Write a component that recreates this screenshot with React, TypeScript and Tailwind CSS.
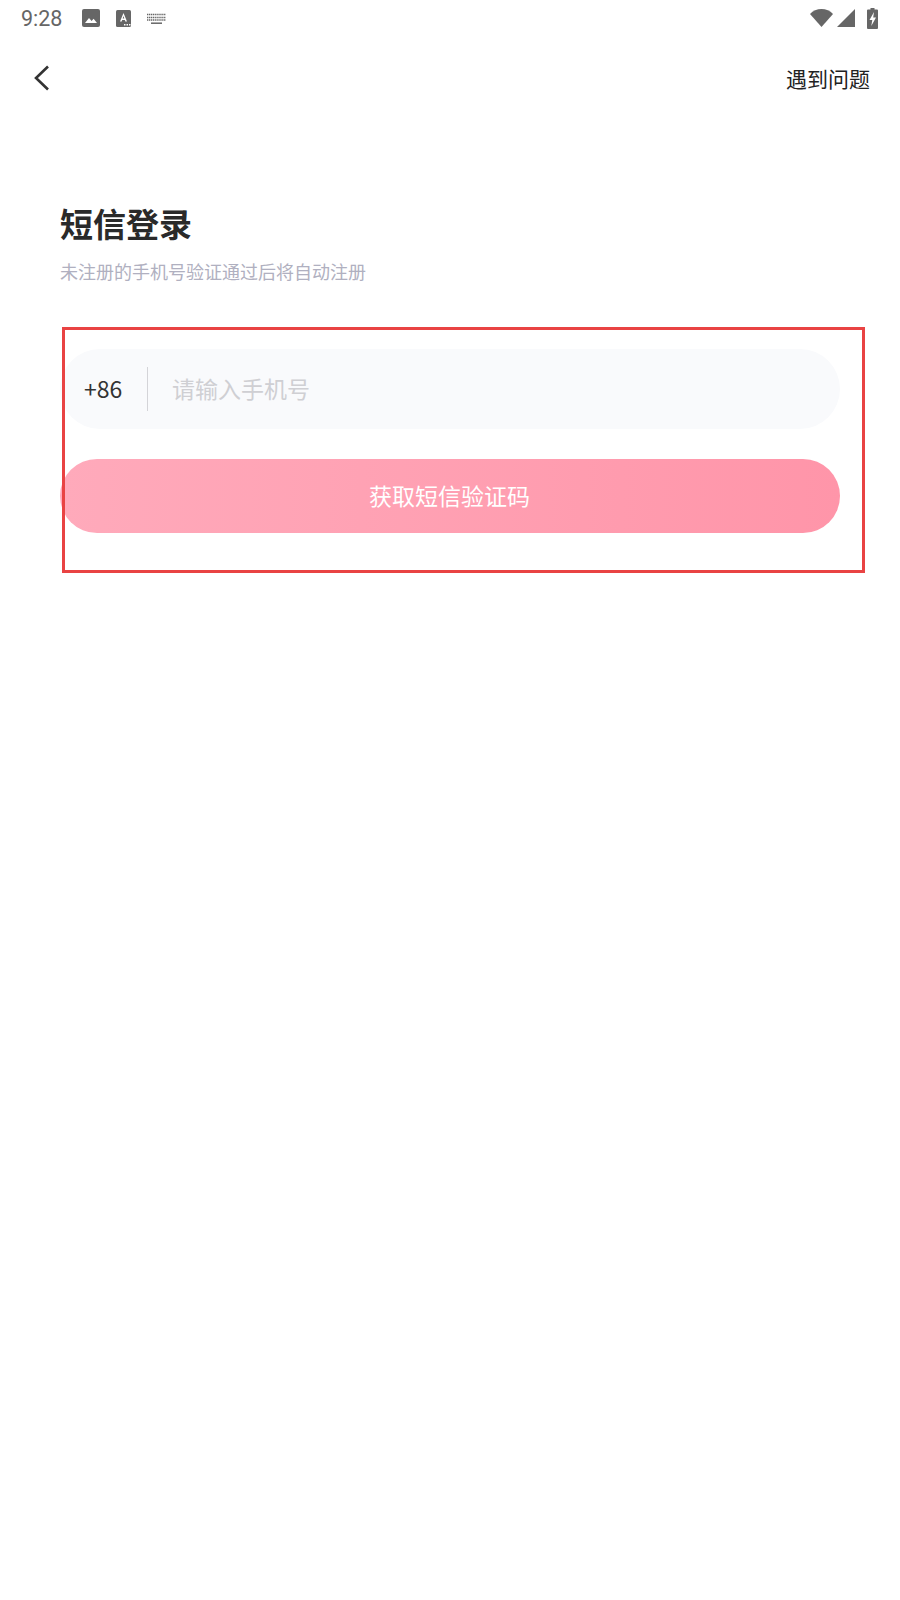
const cjk = "font-['Noto_Sans_CJK_SC','Noto_Sans',sans-serif]";

function StatusBar() {
  return (
    <div className="flex h-[36px] items-center justify-between pl-[21px] pr-[22px] text-[#666666]">
      <div className="flex items-center">
        <span className="mt-[1px] w-[42px] font-['Roboto',sans-serif] text-[21.5px] leading-none">9:28</span>
        <div className="ml-[19px] flex items-center">
          <svg width="18" height="18" viewBox="0 0 18 18" fill="#666666">
            <path d="M2 0h14a2 2 0 0 1 2 2v14a2 2 0 0 1-2 2H2a2 2 0 0 1-2-2V2a2 2 0 0 1 2-2z" />
            <path d="M3 14l4-5 2.600 3 2-2.300L15 14z" fill="#ffffff" />
          </svg>
          <svg className="ml-[16px]" width="15" height="17" viewBox="0 0 15 17">
            <rect width="15" height="17" rx="1.500" fill="#666666" />
            <path d="M4 11.500L7.500 3l3.500 8.500H9.300L8.800 10H6.200l-.5 1.500zM6.700 8.500h1.600L7.500 6z" fill="#ffffff" />
            <rect x="8" y="14" width="1.500" height="1.500" fill="#ffffff" />
            <rect x="10.500" y="14" width="1.500" height="1.500" fill="#ffffff" />
            <rect x="13" y="14" width="1.500" height="1.500" fill="#ffffff" />
          </svg>
          <svg className="ml-[16px]" width="19" height="11" viewBox="0 0 19 11" fill="none" stroke="#666666" strokeWidth="1.500">
            <path d="M0 1.500h19M0 4.500h19M0 7h19" strokeDasharray="1.300 .6" />
            <path d="M4 10.200h11" />
          </svg>
        </div>
      </div>
      <div className="flex items-center">
        <svg width="23" height="18" viewBox="0 0 23 18" fill="#666666">
          <path d="M0 5C3 1.800 7 0 11.500 0S20 1.800 23 5L11.500 18z" />
        </svg>
        <svg className="ml-[4px]" width="18" height="18" viewBox="0 0 18 18" fill="#666666">
          <path d="M18 0v18H0z" />
        </svg>
        <svg className="ml-[12px]" width="11" height="21" viewBox="0 0 11 21">
          <path d="M3.500 0h4v1.500H10a1 1 0 0 1 1 1V20a1 1 0 0 1-1 1H1a1 1 0 0 1-1-1V2.500a1 1 0 0 1 1-1h2.500z" fill="#666666" />
          <path d="M7 4L2.500 12h2.800l-1 6L9 9.500H6.200z" fill="#ffffff" />
        </svg>
      </div>
    </div>
  );
}

export default function App() {
  return (
    <div className={`relative h-[1600px] w-[900px] bg-white ${cjk}`}>
      <StatusBar />

      <div className="flex h-[84px] items-center justify-between pl-[34px] pr-[30px]">
        <svg width="16" height="26" viewBox="0 0 16 26" fill="none" stroke="#333333" strokeWidth="2.600">
          <path d="M14 1.500L2 13l12 11.500" />
        </svg>
        <span className="text-[21px] leading-none text-[#222222]">遇到问题</span>
      </div>

      <div className="px-[60px] pt-[81px]">
        <h1 className="text-[33px] font-semibold leading-[44px] text-[#2a2a2a]">短信登录</h1>
        <p className="mt-[13px] text-[18px] leading-[26px] text-[#b0b0c0]">未注册的手机号验证通过后将自动注册</p>

        <div className="mt-[65px] flex h-[80px] w-[780px] items-center rounded-full bg-[#f9fafc]">
          <span className="mb-[2px] ml-[24px] w-[39px] text-[23px] leading-none text-[#333333]">+86</span>
          <div className="ml-[24px] h-[44px] w-px bg-[#d4d4d8]" />
          <span className="mb-[2px] ml-[24px] text-[23px] leading-none text-[#cfcfd3]">请输入手机号</span>
        </div>

        <button className="mt-[30px] flex h-[74px] w-[780px] items-center justify-center rounded-full bg-gradient-to-r from-[#ffaabb] to-[#ff95a9] pb-[2px] pr-[1px] text-[23px] text-white">
          获取短信验证码
        </button>
      </div>

      {/* annotation box drawn over the form */}
      <div className="pointer-events-none absolute left-[62px] top-[327px] h-[246px] w-[803px] border-[3px] border-[#e94343]" />
    </div>
  );
}
